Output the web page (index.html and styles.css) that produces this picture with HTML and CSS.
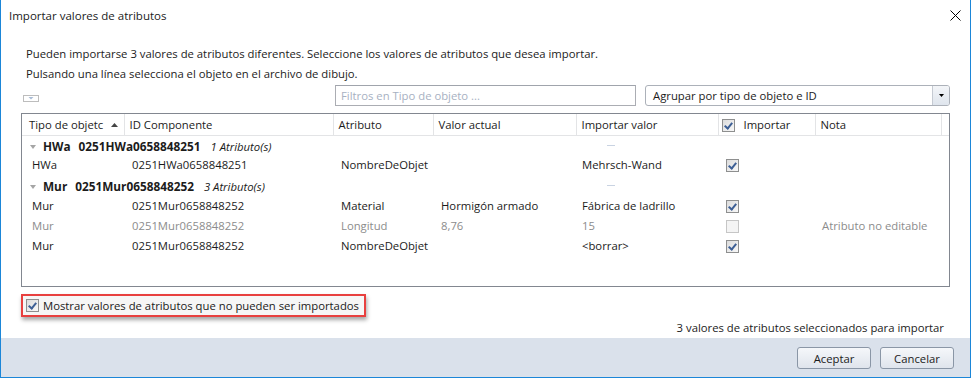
FILE: index.html
```html
<!DOCTYPE html>
<html lang="es">
<head>
    <meta charset="UTF-8">
    <meta name="viewport" content="width=device-width, initial-scale=1.0">
    <title>Importar valores de atributos</title>
    <link rel="stylesheet" href="styles.css">
</head>
<body>
    <div class="window">
        <div class="titlebar">
            <span class="title">Importar valores de atributos</span>
            <svg class="close" width="11" height="11" viewBox="0 0 11 11">
                <path d="M0.5 0.5 L10.5 10.5 M10.5 0.5 L0.5 10.5" stroke="#000" stroke-width="1" fill="none"/>
            </svg>
        </div>

        <div class="content">
            <p class="info">Pueden importarse 3 valores de atributos diferentes. Seleccione los valores de atributos que desea importar.</p>
            <p class="info">Pulsando una línea selecciona el objeto en el archivo de dibujo.</p>

            <div class="toolbar">
                <svg class="expander" width="16" height="7" viewBox="0 0 16 7">
                    <rect x="0.5" y="0.5" width="15" height="6" fill="#fff" stroke="#7a7a7a" stroke-dasharray="1 1"/>
                    <path d="M5.5 2 L10.5 2 L8 4.5 Z" fill="#a9bcd6"/>
                </svg>
                <input type="text" class="filter" placeholder="Filtros en Tipo de objeto ...">
                <div class="combo">
                    <span class="combo-text">Agrupar por tipo de objeto e ID</span>
                    <span class="combo-btn">
                        <svg width="5" height="3" viewBox="0 0 5 3"><path d="M0 0 L5 0 L2.5 3 Z" fill="#000"/></svg>
                    </span>
                </div>
            </div>

            <div class="grid">
                <table>
                    <colgroup>
                        <col style="width: 102px">
                        <col style="width: 209px">
                        <col style="width: 100px">
                        <col style="width: 143px">
                        <col style="width: 142px">
                        <col style="width: 97px">
                        <col style="width: 126px">
                        <col>
                    </colgroup>
                    <thead>
                        <tr>
                            <th class="first">Tipo de objetc
                                <svg class="sort" width="7" height="4" viewBox="0 0 7 4"><path d="M0 4 L7 4 L3.5 0 Z" fill="#444"/></svg>
                            </th>
                            <th>ID Componente</th>
                            <th>Atributo</th>
                            <th>Valor actual</th>
                            <th>Importar valor</th>
                            <th class="check-head"><span class="chk checked"></span>Importar</th>
                            <th>Nota</th>
                            <th class="filler"></th>
                        </tr>
                    </thead>
                    <tbody>
                        <tr class="group">
                            <td colspan="4">
                                <span class="arrow"></span><b>HWa</b><b class="gid">0251HWa0658848251</b><i>1 Atributo(s)</i>
                            </td>
                            <td><span class="dash"></span></td>
                            <td colspan="3"></td>
                        </tr>
                        <tr>
                            <td class="c1">HWa</td>
                            <td class="c2">0251HWa0658848251</td>
                            <td class="c3">NombreDeObjet</td>
                            <td class="c4"></td>
                            <td class="c5">Mehrsch-Wand</td>
                            <td class="c6"><span class="chk checked"></span></td>
                            <td class="c7"></td>
                            <td></td>
                        </tr>
                        <tr class="group">
                            <td colspan="4">
                                <span class="arrow"></span><b>Mur</b><b class="gid">0251Mur0658848252</b><i>3 Atributo(s)</i>
                            </td>
                            <td><span class="dash"></span></td>
                            <td colspan="3"></td>
                        </tr>
                        <tr>
                            <td class="c1">Mur</td>
                            <td class="c2">0251Mur0658848252</td>
                            <td class="c3">Material</td>
                            <td class="c4">Hormigón armado</td>
                            <td class="c5">Fábrica de ladrillo</td>
                            <td class="c6"><span class="chk checked"></span></td>
                            <td class="c7"></td>
                            <td></td>
                        </tr>
                        <tr class="disabled">
                            <td class="c1">Mur</td>
                            <td class="c2">0251Mur0658848252</td>
                            <td class="c3">Longitud</td>
                            <td class="c4">8,76</td>
                            <td class="c5">15</td>
                            <td class="c6"><span class="chk off"></span></td>
                            <td class="c7">Atributo no editable</td>
                            <td></td>
                        </tr>
                        <tr>
                            <td class="c1">Mur</td>
                            <td class="c2">0251Mur0658848252</td>
                            <td class="c3">NombreDeObjet</td>
                            <td class="c4"></td>
                            <td class="c5">&lt;borrar&gt;</td>
                            <td class="c6"><span class="chk checked"></span></td>
                            <td class="c7"></td>
                            <td></td>
                        </tr>
                    </tbody>
                </table>
            </div>

            <div class="show-row">
                <label class="highlight"><span class="chk checked"></span>Mostrar valores de atributos que no pueden ser importados</label>
            </div>

            <div class="status">3 valores de atributos seleccionados para importar</div>
        </div>

        <div class="footer">
            <button class="btn">Aceptar</button>
            <button class="btn">Cancelar</button>
        </div>
    </div>
</body>
</html>
```
FILE: styles.css
```css
:root {
    --text-color: #1b1b1b;
    --muted-color: #8c8c8c;
    --window-border: #1b86d8;
    --grid-border: #828790;
    --header-line: #e3e4e6;
    --footer-color: #dae1eb;
}

* {
    box-sizing: border-box;
}

body {
    margin: 0;
    font-family: "Open Sans", sans-serif;
    font-size: 11.3px;
    color: var(--text-color);
    background: #fff;
}

.window {
    width: 971px;
    height: 378px;
    display: flex;
    flex-direction: column;
    border-left: 1px solid var(--window-border);
    border-right: 1px solid var(--window-border);
    border-bottom: 1px solid var(--window-border);
    background: #fff;
}

.titlebar {
    height: 31px;
    display: flex;
    align-items: center;
    justify-content: space-between;
    padding: 0 9px 0 8px;
}

.title {
    font-size: 11.5px;
    line-height: 31px;
}

.content {
    flex: 1;
    padding: 13px 20px 0 20px;
}

.info {
    margin: 0;
    padding-left: 5px;
    line-height: 20px;
    height: 20px;
}

.toolbar {
    display: flex;
    align-items: center;
    height: 21px;
    margin-top: 1px;
}

.expander {
    margin: 10px 0 0 2px;
    align-self: flex-start;
}

.filter {
    margin-left: auto;
    width: 301px;
    height: 21px;
    border: 1px solid #abadb3;
    border-top-color: #a0a4ac;
    padding: 0 5px;
    font-family: inherit;
    font-size: 11.3px;
    color: var(--text-color);
    outline: none;
}

.filter::placeholder {
    color: #a7b1c2;
}

.combo {
    margin-left: 9px;
    width: 305px;
    height: 21px;
    display: flex;
    border: 1px solid #acb1b9;
    border-radius: 3px;
    background: #fff;
    overflow: hidden;
}

.combo-text {
    flex: 1;
    padding-left: 7px;
    line-height: 19px;
}

.combo-btn {
    width: 17px;
    border-left: 1px solid #c5cad2;
    background: linear-gradient(#f3f5f8, #dfe5ed);
    display: flex;
    align-items: center;
    justify-content: center;
}

.grid {
    margin-top: 7px;
    height: 174px;
    border: 1px solid var(--grid-border);
    overflow: hidden;
}

table {
    width: 100%;
    border-collapse: collapse;
    table-layout: fixed;
}

th {
    height: 21px;
    padding: 0 0 0 5px;
    font-weight: normal;
    text-align: left;
    white-space: nowrap;
    overflow: hidden;
    border-right: 1px solid var(--header-line);
    border-bottom: 1px solid var(--header-line);
}

th.first {
    padding-left: 7px;
}

th.filler {
    border-right: none;
}

.sort {
    margin-left: 5px;
    vertical-align: 2px;
}

.check-head {
    padding-left: 3px;
}

.check-head .chk {
    margin-right: 9px;
    vertical-align: -3px;
}

td {
    height: 20px;
    padding: 0 0 2px 0;
    line-height: 16px;
    white-space: nowrap;
    overflow: hidden;
}

.c1 { padding-left: 10px; }
.c2 { padding-left: 8px; }
.c3 { padding-left: 8px; }
.c4 { padding-left: 8px; }
.c5 { padding-left: 6px; }
.c6 { padding-left: 8px; }
.c7 { padding-left: 7px; }

.c6 .chk {
    vertical-align: middle;
}

.disabled td {
    color: var(--muted-color);
}

.group td {
    height: 21px;
    padding-top: 2px;
    padding-bottom: 0;
    vertical-align: top;
    line-height: 17px;
}

.group td:first-child {
    padding-left: 8px;
}

.group b {
    font-size: 11.8px;
    font-weight: bold;
}

.group .gid {
    margin-left: 8px;
}

.group i {
    margin-left: 10px;
    font-size: 11.3px;
}

.arrow {
    display: inline-block;
    width: 0;
    height: 0;
    border-left: 3px solid transparent;
    border-right: 3px solid transparent;
    border-top: 4px solid #a5a5a5;
    margin-right: 7px;
    vertical-align: 2px;
}

.dash {
    display: block;
    width: 8px;
    height: 1px;
    margin: 7px 0 0 31px;
    background: #c9d3e2;
}

.chk {
    display: inline-block;
    width: 13px;
    height: 13px;
    border: 1px solid #8e8f8f;
    background: linear-gradient(135deg, #dcdcdc, #f8f8f8);
    position: relative;
}

.chk.checked::after {
    content: "";
    position: absolute;
    left: 3px;
    top: 1px;
    width: 3px;
    height: 6px;
    border-right: 2px solid #3d5f95;
    border-bottom: 2px solid #3d5f95;
    transform: rotate(40deg);
}

.chk.off {
    border-color: #c6c6c6;
    background: #f4f4f4;
}

.show-row {
    margin-top: 7px;
    display: flex;
}

.highlight {
    display: flex;
    align-items: center;
    height: 23px;
    padding: 0 5px 0 3px;
    border: 2px solid #e8403f;
    background: #f6f6f6;
    box-shadow: 1px 3px 4px rgba(0, 0, 0, 0.35);
    font-size: 11.3px;
}

.highlight .chk {
    margin-right: 4px;
}

.status {
    text-align: right;
    padding-right: 6px;
    margin-top: 2px;
    line-height: 18px;
}

.footer {
    height: 39px;
    background-color: var(--footer-color);
    display: flex;
    justify-content: flex-end;
    align-items: flex-start;
    gap: 9px;
    padding: 9px 16px 0 0;
}

.btn {
    width: 74px;
    height: 22px;
    border: 1px solid #8a96a6;
    border-radius: 3px;
    background: linear-gradient(#f5f7fa, #dfe4ec);
    font-family: inherit;
    font-size: 11.3px;
    color: var(--text-color);
    padding: 0;
}
```
